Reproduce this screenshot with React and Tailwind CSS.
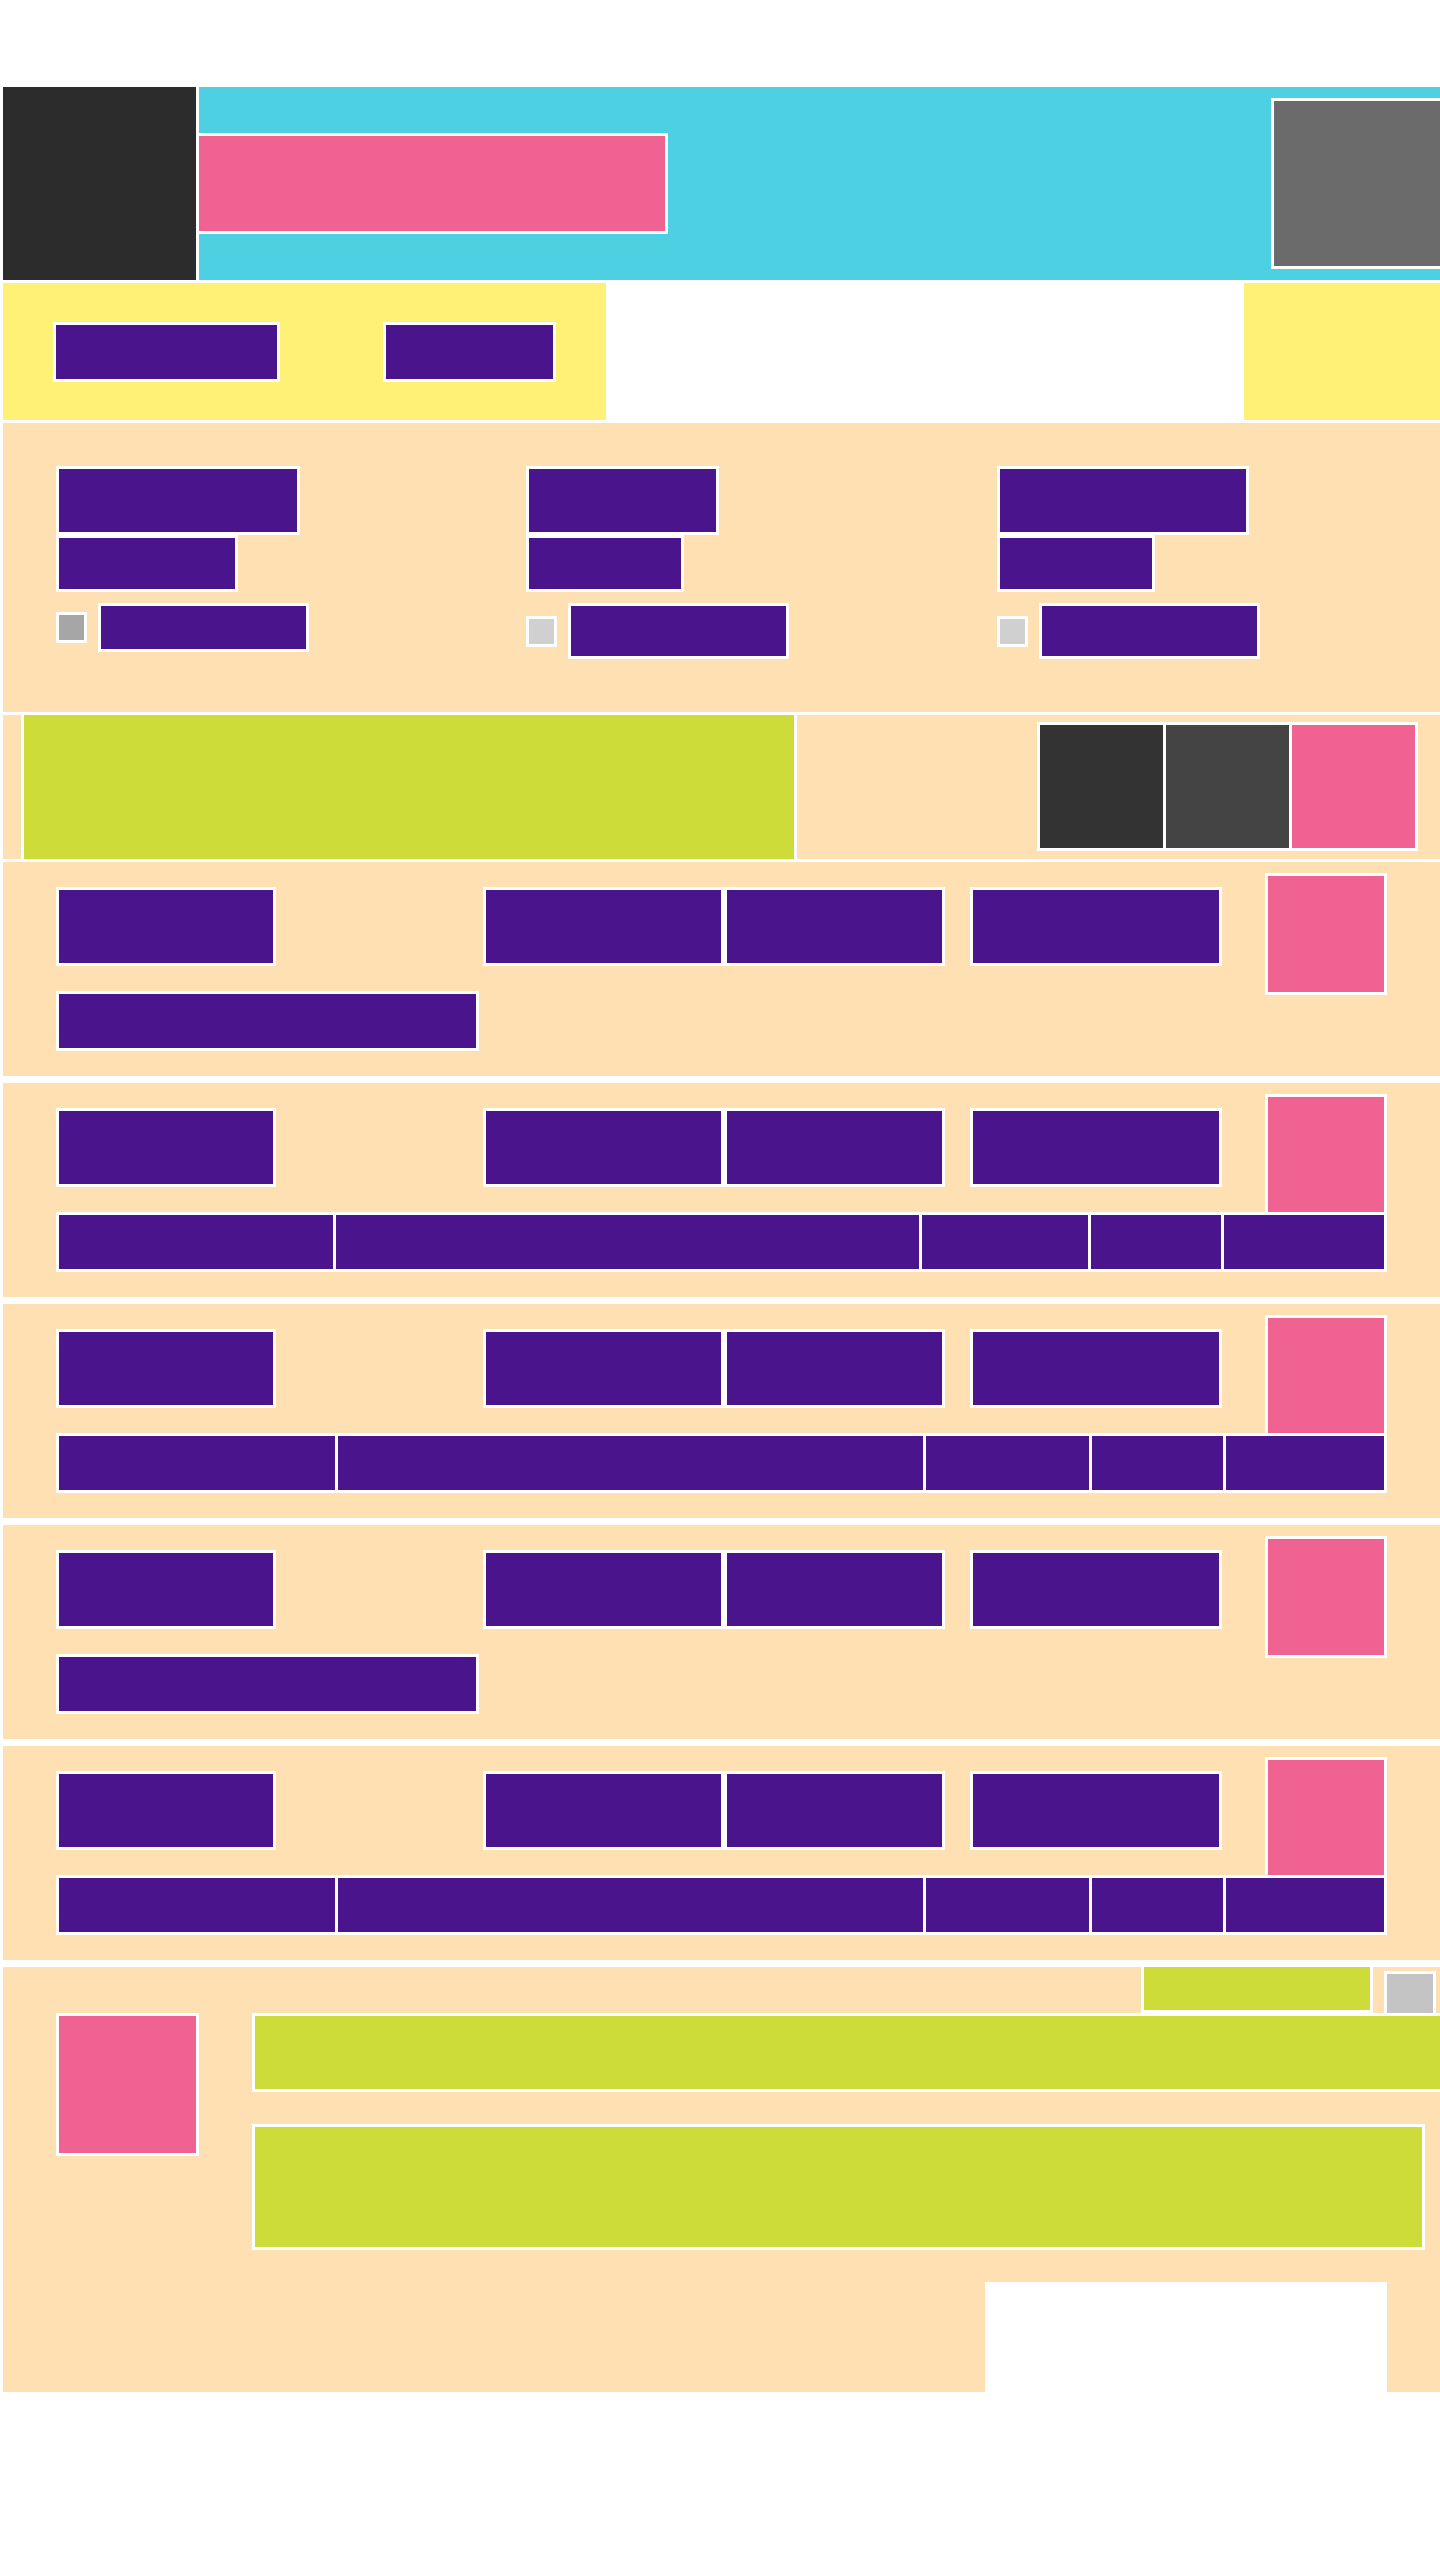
const purple = 'bg-[#4a148c] border-[3px] border-white'

const filters = [
  { col: 'w-[470px]', a: 'w-[244px]', b: 'w-[182px]', box: 'bg-[#a6a6a6]', label: 'w-[211px] h-[49px]' },
  { col: 'w-[471px]', a: 'w-[193px]', b: 'w-[158px]', box: 'bg-[#d0d0d0]', label: 'w-[221px] h-[56px]' },
  { col: 'flex-1', a: 'w-[252px]', b: 'w-[158px]', box: 'bg-[#d0d0d0]', label: 'w-[221px] h-[56px]' },
]

const segA = ['w-[274px]', 'w-[583px]', 'w-[166px]', 'w-[130px]', 'w-[160px]']
const segB = ['w-[276px]', 'w-[585px]', 'w-[163px]', 'w-[131px]', 'w-[158px]']

// null = one short bar on the second line
const rows = [null, segA, segB, null, segB]

function Row({ segs, first }) {
  return (
    <div className={`h-[214px] bg-[#ffe0b2] pl-[53px] pt-[11px] flex flex-col ${first ? 'mt-[3px]' : 'mt-[7px]'}`}>
      <div className="flex items-start">
        <div className={`${purple} w-[220px] h-[79px] mt-[14px]`} />
        <div className="ml-[207px] mt-[14px] flex gap-[6px] bg-white p-[3px]">
          <div className="w-[235px] h-[73px] bg-[#4a148c]" />
          <div className="w-[215px] h-[73px] bg-[#4a148c]" />
        </div>
        <div className={`${purple} ml-[25px] mt-[14px] w-[252px] h-[79px]`} />
        <div className="ml-[43px] w-[122px] h-[122px] bg-[#f06292] border-[3px] border-white" />
      </div>
      {segs ? (
        <div className="relative -mt-[4px] flex w-[1331px] gap-[3px] bg-white p-[3px]">
          {segs.map((w, i) => (
            <div key={i} className={`${w} h-[54px] bg-[#4a148c]`} />
          ))}
        </div>
      ) : (
        <div className={`${purple} relative -mt-[4px] w-[423px] h-[60px]`} />
      )}
    </div>
  )
}

export default function App() {
  return (
    <div className="min-h-[2560px] bg-white pt-[87px] pl-[3px]">
      {/* header */}
      <div className="flex h-[193px] gap-[3px]">
        <div className="w-[193px] shrink-0 bg-[#2c2c2c]" />
        <div className="flex flex-1 items-center overflow-hidden bg-[#4dd0e1]">
          <div className="w-[469px] h-[101px] shrink-0 border-y-[3px] border-r-[3px] border-white bg-[#f06292]" />
          <div className="ml-[603px] w-[200px] h-[171px] shrink-0 border-[3px] border-white bg-[#6b6b6b]" />
        </div>
      </div>

      {/* nav */}
      <div className="mt-[3px] flex h-[137px]">
        <div className="flex w-[603px] items-center bg-[#fff176] pl-[50px]">
          <div className={`${purple} w-[227px] h-[60px]`} />
          <div className={`${purple} ml-[103px] w-[173px] h-[60px]`} />
        </div>
        <div className="ml-auto w-[196px] bg-[#fff176]" />
      </div>

      {/* filters */}
      <div className="mt-[3px] flex h-[289px] bg-[#ffe0b2] pl-[53px] pt-[43px]">
        {filters.map((f, i) => (
          <div key={i} className={`${f.col} flex flex-col items-start`}>
            <div className={`${purple} ${f.a} h-[69px]`} />
            <div className={`${purple} ${f.b} h-[57px]`} />
            <div className="mt-[11px] flex items-center gap-[11px]">
              <div className={`${f.box} w-[31px] h-[31px] border-[3px] border-white`} />
              <div className={`${purple} ${f.label}`} />
            </div>
          </div>
        ))}
      </div>

      {/* banner + actions */}
      <div className="mt-[3px] flex h-[144px] items-start bg-[#ffe0b2]">
        <div className="ml-[18px] h-full w-[776px] border-x-[3px] border-white bg-[#cddc39]" />
        <div className="ml-auto mr-[22px] mt-[7px] flex gap-[3px] bg-white p-[3px]">
          <div className="w-[123px] h-[123px] bg-[#333333]" />
          <div className="w-[123px] h-[123px] bg-[#444444]" />
          <div className="w-[123px] h-[123px] bg-[#f06292]" />
        </div>
      </div>

      {rows.map((segs, i) => (
        <Row key={i} segs={segs} first={i === 0} />
      ))}

      {/* bottom */}
      <div className="mt-[7px] flex h-[425px] flex-col bg-[#ffe0b2]">
        <div className="flex h-[46px] items-start justify-end">
          <div className="w-[232px] h-[46px] border-x-[3px] border-b-[3px] border-white bg-[#cddc39]" />
          <div className="ml-[11px] mr-[4px] mt-[4px] w-[52px] h-[42px] border-x-[3px] border-t-[3px] border-white bg-[#c4c4c4]" />
        </div>
        <div className="flex flex-1 items-start pl-[53px]">
          <div className="w-[143px] h-[143px] shrink-0 border-[3px] border-white bg-[#f06292]" />
          <div className="ml-[53px] flex h-full flex-1 flex-col">
            <div className="h-[79px] border-y-[3px] border-l-[3px] border-white bg-[#cddc39]" />
            <div className="mt-[32px] mr-[15px] h-[126px] border-[3px] border-white bg-[#cddc39]" />
            <div className="mt-auto ml-[733px] w-[402px] h-[110px] bg-white" />
          </div>
        </div>
      </div>
    </div>
  )
}
